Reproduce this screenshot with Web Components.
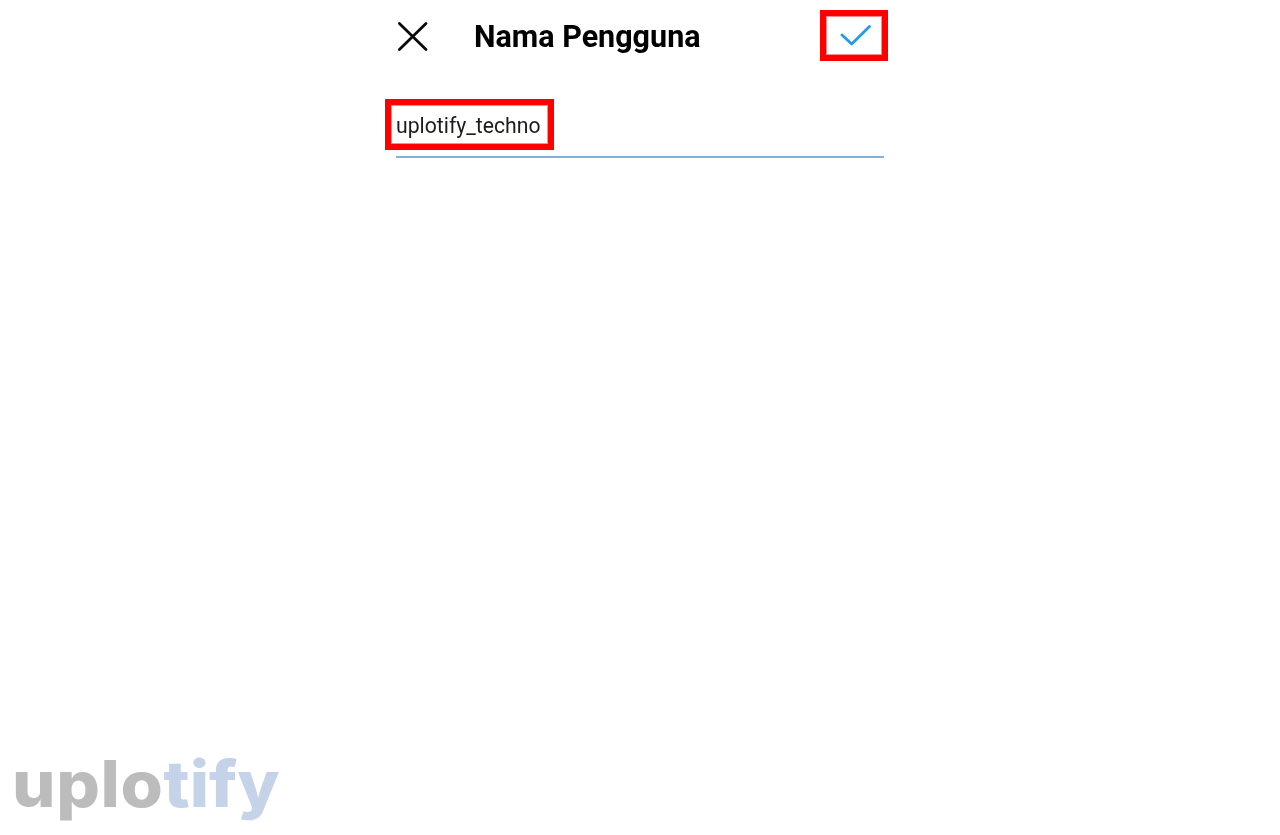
<!DOCTYPE html>
<html lang="id">
<head>
<meta charset="utf-8">
<title>Nama Pengguna</title>
<style>
  html, body { margin: 0; height: 100%; background: #fff; }
  body { font-family: Roboto, "Liberation Sans", sans-serif; color: #000; }
</style>
</head>
<body>
<username-screen>
  <edit-header title-text="Nama Pengguna"></edit-header>
  <username-field value="uplotify_techno"></username-field>
</username-screen>
<brand-mark></brand-mark>

<script>
  // red annotation box from the tutorial screenshot
  class MarkBox extends HTMLElement {
    constructor() {
      super();
      this.attachShadow({ mode: "open" }).innerHTML = `
        <style>
          :host{display:flex;align-items:center;box-sizing:border-box;border:6px solid #fe0000;box-shadow:inset 0 0 0 1px rgba(254,0,0,.45)}
        </style>
        <slot></slot>`;
    }
  }

  class UsernameScreen extends HTMLElement {
    constructor() {
      super();
      this.attachShadow({ mode: "open" }).innerHTML = `
        <style>
          :host{display:block;box-sizing:border-box;width:512px;min-height:835px;margin:0 auto;padding-top:10px}
        </style>
        <slot></slot>`;
    }
  }

  class EditHeader extends HTMLElement {
    constructor() {
      super();
      const root = this.attachShadow({ mode: "open" });
      root.innerHTML = `
        <style>
          :host{display:flex;align-items:center;height:51px;padding-right:8px}
          .close{display:block;width:32px;height:32px;margin:0 0 0 12px;flex:none;filter:blur(.35px)}
          h1{flex:1;margin:0 0 0 46px;padding-top:2px;font:700 30.5px/34px Roboto,"Liberation Sans",sans-serif;color:#000;filter:blur(.35px)}
          mark-box{width:68px;height:51px;justify-content:center;flex:none}
          .check{display:block;width:40px;height:30px;filter:blur(.35px)}
        </style>
        <svg class="close" viewBox="0 0 32 32" fill="none" stroke="#0a0a0a" stroke-width="2.8" stroke-linecap="round">
          <path d="M3.4 3.4L30 29.4M30 3.4L3.4 29.4"/>
        </svg>
        <h1></h1>
        <mark-box>
          <svg class="check" viewBox="0 0 40 30" fill="none" stroke="#1f9bf0" stroke-width="2.8" stroke-linecap="round" stroke-linejoin="round">
            <path d="M8 14L17.700 23L35.500 5.500"/>
          </svg>
        </mark-box>`;
      root.querySelector("h1").textContent = this.getAttribute("title-text");
    }
  }

  class UsernameField extends HTMLElement {
    constructor() {
      super();
      const root = this.attachShadow({ mode: "open" });
      root.innerHTML = `
        <style>
          :host{display:block;margin-top:38px}
          mark-box{width:169px;height:51px;margin-left:1px}
          span{font:400 21.2px/26px Roboto,"Liberation Sans",sans-serif;color:#1c1c1c;padding:2px 0 0 5px;white-space:nowrap;filter:blur(.3px)}
          .line{height:2px;background:#7fb2dc;margin:6px 12px 0 12px}
        </style>
        <mark-box><span></span></mark-box>
        <div class="line"></div>`;
      root.querySelector("span").textContent = this.getAttribute("value");
    }
  }

  // watermark, sits over the empty page corner
  class BrandMark extends HTMLElement {
    constructor() {
      super();
      this.attachShadow({ mode: "open" }).innerHTML = `
        <style>
          :host{display:block;position:absolute;left:12px;top:744px;font:800 64px/80px Inter,"Open Sans",sans-serif;white-space:nowrap;
                transform:scaleX(1.07);transform-origin:left center;filter:blur(.4px)}
          .a{color:#bcbcbc;letter-spacing:.6px}.b{color:#c5d3e8}
        </style>
        <span class="a">uplo</span><span class="b">tify</span>`;
    }
  }

  customElements.define("mark-box", MarkBox);
  customElements.define("username-screen", UsernameScreen);
  customElements.define("edit-header", EditHeader);
  customElements.define("username-field", UsernameField);
  customElements.define("brand-mark", BrandMark);
</script>
</body>
</html>
